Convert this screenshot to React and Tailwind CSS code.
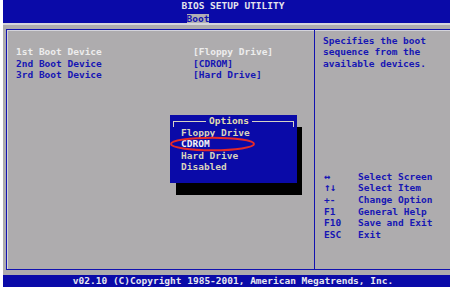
import React from 'react';

const blue = 'text-[#1616b4]';

const bootRows = [
    { label: '1st Boot Device', value: '[Floppy Drive]', active: true },
    { label: '2nd Boot Device', value: '[CDROM]' },
    { label: '3rd Boot Device', value: '[Hard Drive]' },
];

const keys = [
    ['↔', 'Select Screen', true],
    ['↑↓', 'Select Item', true],
    ['+-', 'Change Option'],
    ['F1', 'General Help'],
    ['F10', 'Save and Exit'],
    ['ESC', 'Exit'],
];

const options = ['Floppy Drive', 'CDROM', 'Hard Drive', 'Disabled'];

const OptionsPopup = () => (
    <>
        <div className="absolute left-[176px] top-[127px] w-[126px] h-[68px] bg-black" />
        <div className="absolute left-[170px] top-[115px] w-[127px] h-[68px] bg-[#0a0aa8] flex flex-col">
            <div className="flex items-start px-[3px] h-[12px]">
                <div className="mt-[6px] w-[33px] h-[6px] border-t border-l border-[#d6d2c4]" />
                <span className="px-[3px] leading-[12px] text-[#e2dcae]">Options</span>
                <div className="mt-[6px] flex-1 h-[6px] border-t border-r border-[#d6d2c4]" />
            </div>
            <ul className="pl-[11px]">
                {options.map((o) => (
                    <li key={o} className={`leading-[11.3px] ${o === 'CDROM' ? 'text-[#f4f4f4]' : 'text-[#d8d4bc]'}`}>{o}</li>
                ))}
            </ul>
        </div>
        <svg className="absolute left-[169px] top-[136px]" width="88" height="16" viewBox="0 0 88 16">
            <ellipse cx="43.5" cy="8" rx="41.5" ry="6.3" fill="none" stroke="#e42a2a" strokeWidth="2" />
        </svg>
    </>
);

export default function App() {
    return (
        <div className="relative w-[450px] h-[288px] bg-white pl-[3px] flex flex-col font-bold text-[9.5px] font-['DejaVu_Sans_Mono','Liberation_Mono',monospace]">
            <div className="h-[23px] bg-[#0a0aa8] flex flex-col items-center pl-[13px] pt-[1px]">
                <div className="leading-[10px] text-[#e4e4ec]">BIOS SETUP UTILITY</div>
                <div className="w-[103px] pl-[5px] mt-[1px]">
                    <span className="inline-block bg-[#b2b0b4] text-[#1010b0] h-[10px] leading-[10.5px]">Boot</span>
                </div>
            </div>
            <div className="h-[2px] bg-[#d6d6dc]" />
            <div className="flex-1 bg-[#aeacae] pt-[4px] pl-[3px] pb-[5px] flex flex-col">
                <div className="flex-1 flex border-t border-b border-l border-[#1212b0] shadow-[inset_1px_1px_0_#d4d4dc]">
                    <div className="w-[308px] border-r border-[#1212b0] pl-[9px] pt-[16px]">
                        {bootRows.map((r) => (
                            <div key={r.label} className={`flex leading-[11.5px] ${r.active ? 'text-[#ededed]' : blue}`}>
                                <span className="w-[177px]">{r.label}</span>
                                <span>{r.value}</span>
                            </div>
                        ))}
                    </div>
                    <div className={`flex-1 pl-[8px] pt-[5px] ${blue}`}>
                        <div className="leading-[11.3px]">
                            <div>Specifies the boot</div>
                            <div>sequence from the</div>
                            <div>available devices.</div>
                        </div>
                        <div className="mt-[102px] pl-[1px]">
                            {keys.map(([k, d, arrow]) => (
                                <div key={k} className="flex h-[11.6px] leading-[11.6px]">
                                    <span className={`w-[34px] ${arrow ? 'text-[10.5px] leading-[11.6px] tracking-[-0.5px]' : ''}`}>{k}</span>
                                    <span>{d}</span>
                                </div>
                            ))}
                        </div>
                    </div>
                </div>
            </div>
            <div className="h-[12px] mb-[1px] bg-[#0a0aa8] pl-[13px] text-center leading-[12px] text-[#e8e8ee]">
                v02.10 (C)Copyright 1985-2001, American Megatrends, Inc.
            </div>
            <OptionsPopup />
        </div>
    );
}
